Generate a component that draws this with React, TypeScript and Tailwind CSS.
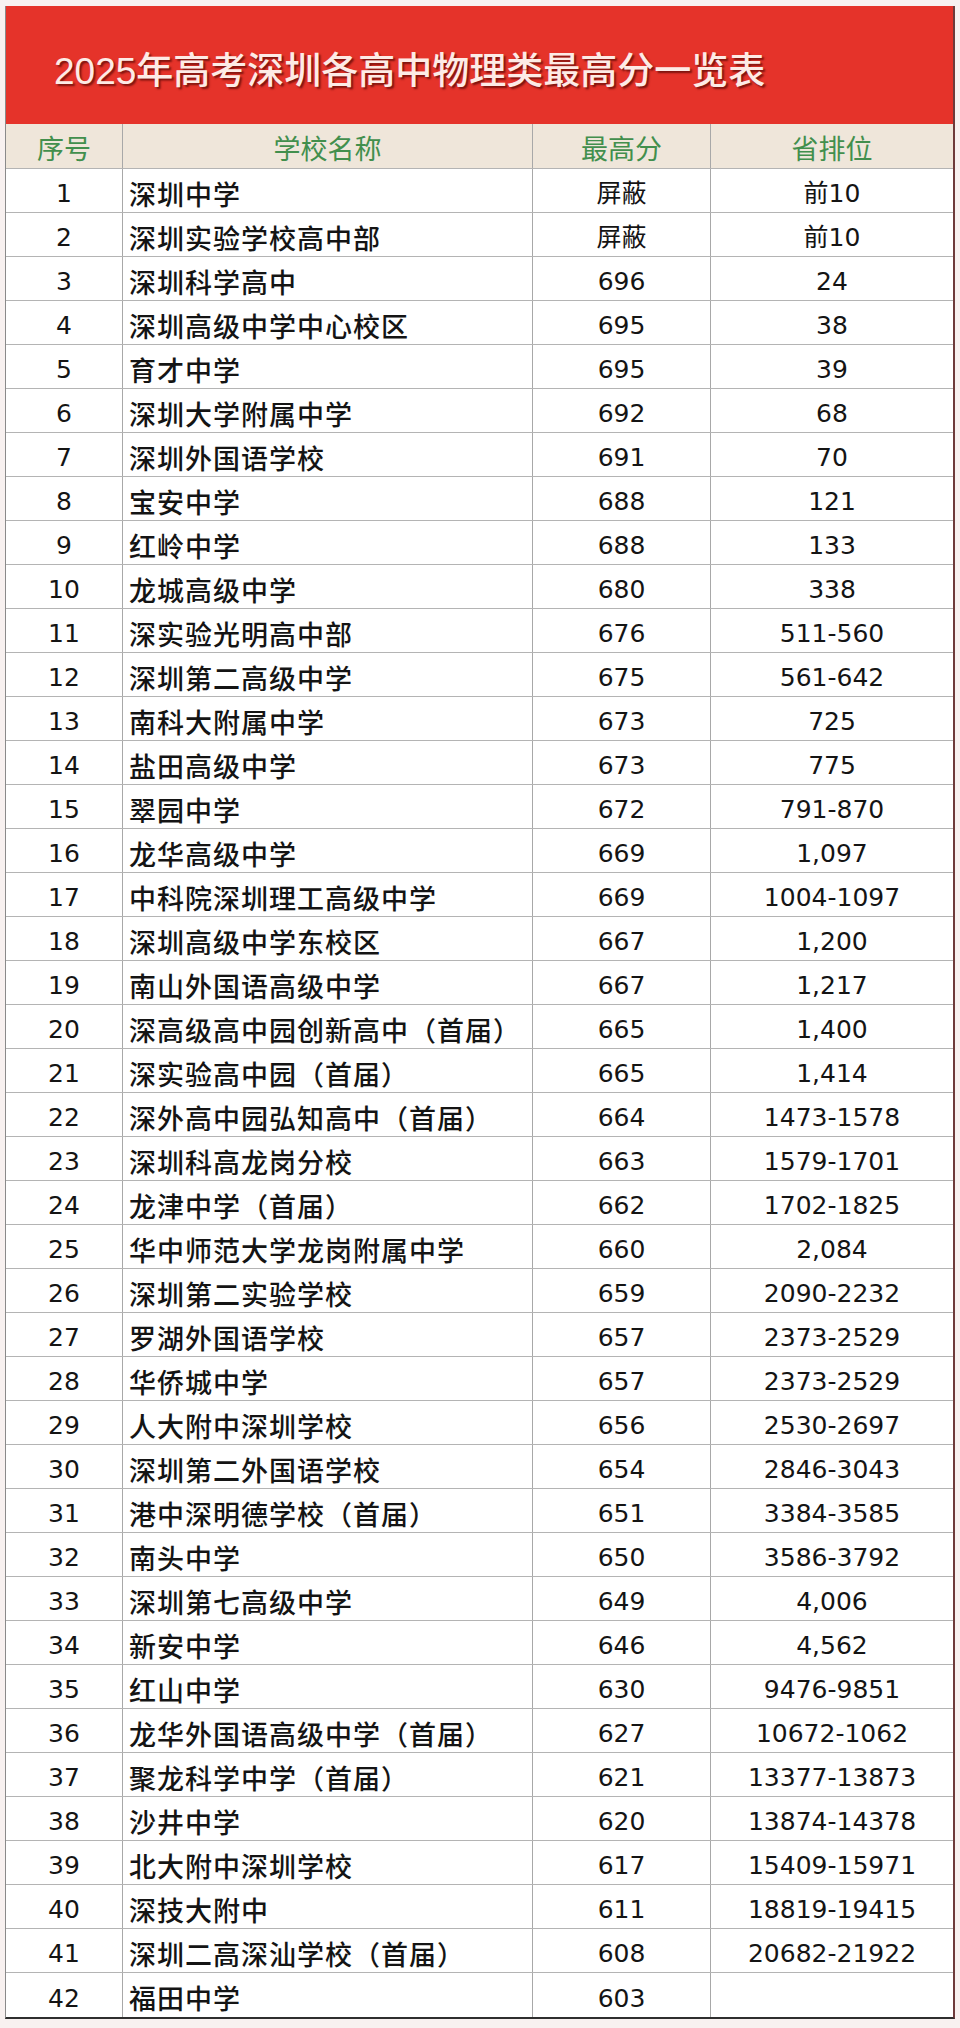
import React from "react";

type Row = [number, string, string, string];

const rows: Row[] = [
  [1, "深圳中学", "屏蔽", "前10"],
  [2, "深圳实验学校高中部", "屏蔽", "前10"],
  [3, "深圳科学高中", "696", "24"],
  [4, "深圳高级中学中心校区", "695", "38"],
  [5, "育才中学", "695", "39"],
  [6, "深圳大学附属中学", "692", "68"],
  [7, "深圳外国语学校", "691", "70"],
  [8, "宝安中学", "688", "121"],
  [9, "红岭中学", "688", "133"],
  [10, "龙城高级中学", "680", "338"],
  [11, "深实验光明高中部", "676", "511-560"],
  [12, "深圳第二高级中学", "675", "561-642"],
  [13, "南科大附属中学", "673", "725"],
  [14, "盐田高级中学", "673", "775"],
  [15, "翠园中学", "672", "791-870"],
  [16, "龙华高级中学", "669", "1,097"],
  [17, "中科院深圳理工高级中学", "669", "1004-1097"],
  [18, "深圳高级中学东校区", "667", "1,200"],
  [19, "南山外国语高级中学", "667", "1,217"],
  [20, "深高级高中园创新高中（首届）", "665", "1,400"],
  [21, "深实验高中园（首届）", "665", "1,414"],
  [22, "深外高中园弘知高中（首届）", "664", "1473-1578"],
  [23, "深圳科高龙岗分校", "663", "1579-1701"],
  [24, "龙津中学（首届）", "662", "1702-1825"],
  [25, "华中师范大学龙岗附属中学", "660", "2,084"],
  [26, "深圳第二实验学校", "659", "2090-2232"],
  [27, "罗湖外国语学校", "657", "2373-2529"],
  [28, "华侨城中学", "657", "2373-2529"],
  [29, "人大附中深圳学校", "656", "2530-2697"],
  [30, "深圳第二外国语学校", "654", "2846-3043"],
  [31, "港中深明德学校（首届）", "651", "3384-3585"],
  [32, "南头中学", "650", "3586-3792"],
  [33, "深圳第七高级中学", "649", "4,006"],
  [34, "新安中学", "646", "4,562"],
  [35, "红山中学", "630", "9476-9851"],
  [36, "龙华外国语高级中学（首届）", "627", "10672-1062"],
  [37, "聚龙科学中学（首届）", "621", "13377-13873"],
  [38, "沙井中学", "620", "13874-14378"],
  [39, "北大附中深圳学校", "617", "15409-15971"],
  [40, "深技大附中", "611", "18819-19415"],
  [41, "深圳二高深汕学校（首届）", "608", "20682-21922"],
  [42, "福田中学", "603", ""],
];

const cjk = "font-['Noto_Sans_CJK_SC',sans-serif]";
const num = "font-['DejaVu_Sans','Noto_Sans_CJK_SC',sans-serif]";
const grid = "grid grid-cols-[117px_410px_178px_242px]";

export default function App() {
  return (
    <div className="w-[960px] h-[2028px] bg-[#f8f1f0] pt-[6px] overflow-hidden">
      <div className="ml-[5px] w-[950px] border-l border-l-[#8a8a8a] border-r-2 border-r-[#6e3b3b] border-b-2 border-b-[#2e2e2e] bg-white">
        {/* title band */}
        <div className="h-[118px] bg-[#e5332a] flex items-center pl-[48px] pt-[10px]">
          <h1 className="text-[37px] leading-none text-[#fdebe6] font-medium [text-shadow:2px_2px_2px_rgba(90,10,5,0.75)]">
            <span className="font-['Liberation_Sans',sans-serif]">2025</span>
            <span className={cjk}>年高考深圳各高中物理类最高分一览表</span>
          </h1>
        </div>

        {/* column headers */}
        <div className={`${grid} h-[45px] bg-[#efe6da] border-b border-[#b4b4b4] text-[#428f4d] text-[27px] leading-none ${cjk}`}>
          <div className="flex items-center justify-center border-r border-[#a8a8a8] pt-[2px]">序号</div>
          <div className="flex items-center justify-center border-r border-[#a8a8a8] pt-[2px]">学校名称</div>
          <div className="flex items-center justify-center border-r border-[#a8a8a8] pt-[2px]">最高分</div>
          <div className="flex items-center justify-center pt-[2px]">省排位</div>
        </div>

        {rows.map(([n, name, score, rank], i) => (
          <div
            key={n}
            className={`${grid} h-[44px] text-[#141414] ${
              i < rows.length - 1 ? "border-b border-[#b4b4b4]" : ""
            }`}
          >
            <div className={`flex items-center justify-center border-r border-[#a8a8a8] text-[25px] leading-none pt-[6px] ${num}`}>
              {n}
            </div>
            <div className={`flex items-center pl-[6px] border-r border-[#a8a8a8] text-[27px] leading-none pt-[5px] font-medium tracking-[1px] whitespace-nowrap overflow-hidden ${cjk}`}>
              {name}
            </div>
            <div className={`flex items-center justify-center border-r border-[#a8a8a8] text-[25px] leading-none pt-[6px] ${num}`}>
              {score}
            </div>
            <div className={`flex items-center justify-center text-[25px] leading-none pt-[6px] ${num}`}>
              {rank}
            </div>
          </div>
        ))}
      </div>
    </div>
  );
}
